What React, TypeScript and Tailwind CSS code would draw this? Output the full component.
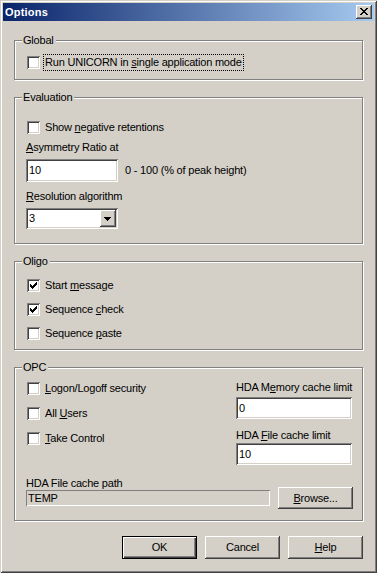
import React from "react";

const FONT: React.CSSProperties = { fontFamily: '"Liberation Sans", Arial, sans-serif' };

const SUNKEN =
  "shadow-[inset_1px_1px_#808080,inset_-1px_-1px_#ffffff,inset_2px_2px_#404040,inset_-2px_-2px_#d4d0c8]";
const RAISED =
  "shadow-[inset_-1px_-1px_#404040,inset_1px_1px_#ffffff,inset_-2px_-2px_#808080,inset_2px_2px_#d4d0c8]";

function Check({ checked }: { checked?: boolean }) {
  return (
    <div className={`relative w-[13px] h-[13px] shrink-0 bg-white ${SUNKEN}`}>
      {checked && (
        <svg
          className="absolute left-0 top-0"
          width="13"
          height="13"
          viewBox="0 0 13 13"
          shapeRendering="crispEdges"
        >
          <path
            fill="#000"
            d="M9 3h1v1h-1z M8 4h2v1h-2z M3 5h1v1h-1z M7 5h3v1h-3z M3 6h2v1h-2z M6 6h3v1h-3z M3 7h5v1h-5z M4 8h3v1h-3z M5 9h1v1h-1z"
          />
        </svg>
      )}
    </div>
  );
}

function CheckRow({
  checked,
  children,
}: {
  checked?: boolean;
  children: React.ReactNode;
}) {
  return (
    <div className="flex items-center h-[13px]">
      <Check checked={checked} />
      <span className="ml-[5px] whitespace-nowrap">{children}</span>
    </div>
  );
}

function Group({
  label,
  className,
  children,
}: {
  label: string;
  className: string;
  children: React.ReactNode;
}) {
  return (
    <div
      className={`relative w-[349px] border border-[#808080] shadow-[inset_1px_1px_#ffffff,1px_1px_#ffffff] ${className}`}
    >
      <span className="absolute left-[7px] top-[-7px] pl-[1px] pr-[2px] bg-[#d4d0c8] leading-[13px]">
        {label}
      </span>
      {children}
    </div>
  );
}

function Edit({ value, className }: { value: string; className: string }) {
  return (
    <div className={`bg-white pl-[3px] flex items-center leading-[13px] ${SUNKEN} ${className}`}>
      {value}
    </div>
  );
}

function Button({
  children,
  isDefault,
  className,
}: {
  children: React.ReactNode;
  isDefault?: boolean;
  className?: string;
}) {
  return (
    <div
      className={`flex items-center justify-center w-[75px] leading-[13px] bg-[#d4d0c8] ${
        isDefault
          ? "border border-black shadow-[inset_1px_1px_#ffffff,inset_-1px_-1px_#404040,inset_-2px_-2px_#808080]"
          : RAISED
      } ${className ?? ""}`}
    >
      {children}
    </div>
  );
}

export default function App() {
  return (
    <div
      className="w-[377px] h-[573px] bg-[#d4d0c8] p-[3px] flex flex-col text-[11px] leading-[13px] tracking-[-0.2px] text-black shadow-[inset_1px_1px_#d4d0c8,inset_-1px_-1px_#404040,inset_2px_2px_#ffffff,inset_-2px_-2px_#808080] overflow-hidden"
      style={FONT}
    >
      {/* Title bar */}
      <div className="h-[18px] shrink-0 flex items-center justify-between pl-[2px] pr-[2px] bg-[linear-gradient(to_right,#0a246a,#a6caf0)]">
        <span className="text-white font-bold text-[11px] leading-[13px] tracking-[0.2px]">Options</span>
        <div className={`relative w-[16px] h-[14px] bg-[#d4d0c8] ${RAISED}`}>
          <svg
            className="absolute left-[4px] top-[3px]"
            width="8"
            height="7"
            viewBox="0 0 8 7"
            shapeRendering="crispEdges"
          >
            <path
              fill="#000"
              d="M0 0h2v1H0z M6 0h2v1H6z M1 1h2v1H1z M5 1h2v1H5z M2 2h4v1H2z M3 3h2v1H3z M2 4h4v1H2z M1 5h2v1H1z M5 5h2v1H5z M0 6h2v1H0z M6 6h2v1H6z"
            />
          </svg>
        </div>
      </div>

      <div className="ml-[11px] flex flex-col">
        {/* Global */}
        <Group label="Global" className="mt-[19px] h-[40px]">
          <div className="pl-[12px] pt-[13px] flex items-center">
            <Check />
            <span className="ml-[3px] border border-dotted border-black px-[1px] py-[1px] leading-[13px] whitespace-nowrap">
              Run UNICORN in <u>s</u>ingle application mode
            </span>
          </div>
        </Group>

        {/* Evaluation */}
        <Group label="Evaluation" className="mt-[17px] h-[147px]">
          <div className="flex flex-col pt-[23px]">
            <div className="pl-[12px]">
              <CheckRow>
                Show <u>n</u>egative retentions
              </CheckRow>
            </div>
            <div className="pl-[11px] mt-[7px]">
              <u>A</u>symmetry Ratio at
            </div>
            <div className="pl-[11px] mt-[5px] flex items-center">
              <Edit value="10" className="w-[92px] h-[23px]" />
              <span className="ml-[7px] whitespace-nowrap">0 - 100 (% of peak height)</span>
            </div>
            <div className="pl-[11px] mt-[8px]">
              <u>R</u>esolution algorithm
            </div>
            <div className="pl-[11px] mt-[5px]">
              <div className={`relative w-[92px] h-[21px] bg-white pl-[3px] flex items-center ${SUNKEN}`}>
                3
                <div className={`absolute right-[2px] top-[2px] w-[16px] h-[17px] bg-[#d4d0c8] ${RAISED}`}>
                  <svg
                    className="absolute left-[4px] top-[7px]"
                    width="7"
                    height="4"
                    viewBox="0 0 7 4"
                    shapeRendering="crispEdges"
                  >
                    <path fill="#000" d="M0 0h7v1H0z M1 1h5v1H1z M2 2h3v1H2z M3 3h1v1H3z" />
                  </svg>
                </div>
              </div>
            </div>
          </div>
        </Group>

        {/* Oligo */}
        <Group label="Oligo" className="mt-[17px] h-[89px]">
          <div className="flex flex-col pl-[12px] pt-[17px] gap-[11px]">
            <CheckRow checked>
              Start <u>m</u>essage
            </CheckRow>
            <CheckRow checked>
              Sequence <u>c</u>heck
            </CheckRow>
            <CheckRow>
              Sequence <u>p</u>aste
            </CheckRow>
          </div>
        </Group>

        {/* OPC */}
        <Group label="OPC" className="mt-[17px] h-[154px]">
          <div className="flex">
            <div className="w-[221px] flex flex-col pl-[12px] pt-[14px] gap-[12px]">
              <CheckRow>
                <u>L</u>ogon/Logoff security
              </CheckRow>
              <CheckRow>
                All <u>U</u>sers
              </CheckRow>
              <CheckRow>
                <u>T</u>ake Control
              </CheckRow>
            </div>
            <div className="flex flex-col pt-[13px]">
              <span className="whitespace-nowrap">
                HDA M<u>e</u>mory cache limit
              </span>
              <Edit value="0" className="mt-[3px] w-[116px] h-[22px]" />
              <span className="mt-[10px] whitespace-nowrap">
                HDA <u>F</u>ile cache limit
              </span>
              <Edit value="10" className="mt-[1px] w-[116px] h-[22px]" />
            </div>
          </div>
          <div className="flex items-end pl-[11px] mt-[12px]">
            <div className="flex flex-col w-[244px] pb-[3px]">
              <span className="whitespace-nowrap">HDA File cache path</span>
              <div className="h-[16px] pl-[2px] flex items-center bg-[#d4d0c8] shadow-[inset_1px_1px_#808080,inset_-1px_-1px_#ffffff]">
                TEMP
              </div>
            </div>
            <Button className="ml-[8px] h-[22px]">
              <span>
                <u>B</u>rowse...
              </span>
            </Button>
          </div>
        </Group>

        {/* Buttons */}
        <div className="mt-[15px] w-[349px] flex justify-end gap-[8px]">
          <Button isDefault className="h-[23px]">
            OK
          </Button>
          <Button className="h-[23px]">Cancel</Button>
          <Button className="h-[23px]">
            <span>
              <u>H</u>elp
            </span>
          </Button>
        </div>
      </div>
    </div>
  );
}
